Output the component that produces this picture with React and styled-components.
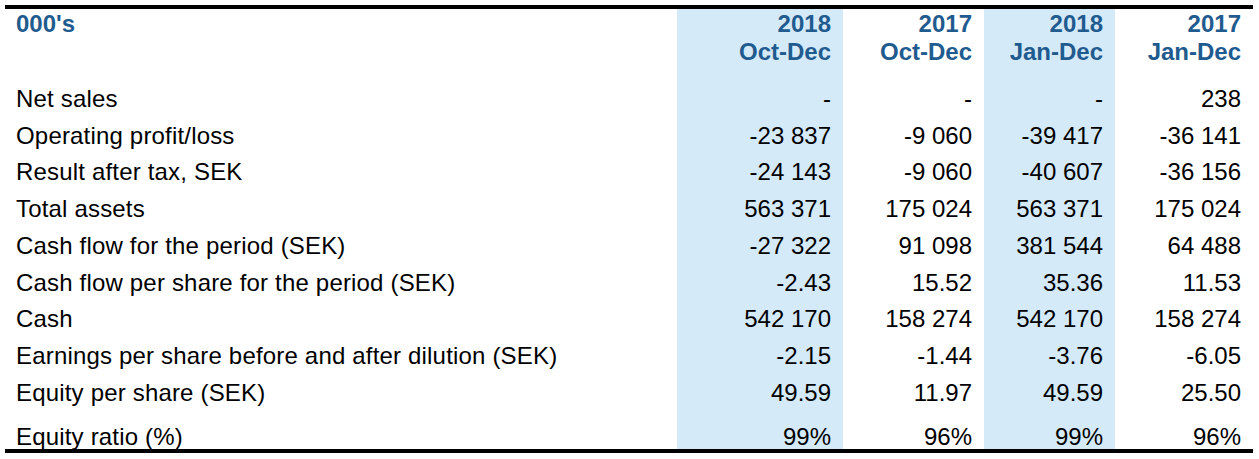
import React from "react";
import styled, { createGlobalStyle } from "styled-components";

const columns = [
  { year: "2018", period: "Oct-Dec", shaded: true },
  { year: "2017", period: "Oct-Dec", shaded: false },
  { year: "2018", period: "Jan-Dec", shaded: true },
  { year: "2017", period: "Jan-Dec", shaded: false },
];

const rows = [
  ["Net sales", "-", "-", "-", "238"],
  ["Operating profit/loss", "-23 837", "-9 060", "-39 417", "-36 141"],
  ["Result after tax, SEK", "-24 143", "-9 060", "-40 607", "-36 156"],
  ["Total assets", "563 371", "175 024", "563 371", "175 024"],
  ["Cash flow for the period (SEK)", "-27 322", "91 098", "381 544", "64 488"],
  ["Cash flow per share for the period (SEK)", "-2.43", "15.52", "35.36", "11.53"],
  ["Cash", "542 170", "158 274", "542 170", "158 274"],
  ["Earnings per share before and after dilution (SEK)", "-2.15", "-1.44", "-3.76", "-6.05"],
  ["Equity per share (SEK)", "49.59", "11.97", "49.59", "25.50"],
  ["Equity ratio (%)", "99%", "96%", "99%", "96%"],
];

function App() {
  return (
    <>
      <GlobalStyle />
      <Page>
        <Table>
          <HeaderRow>
            <HeadLabel>000's</HeadLabel>
            {columns.map((col, i) => (
              <HeadCell key={i} $shaded={col.shaded}>
                <div>{col.year}</div>
                <div>{col.period}</div>
              </HeadCell>
            ))}
          </HeaderRow>
          {rows.map((row, r) => {
            const last = r === rows.length - 1;
            return (
              <Row key={r} $last={last}>
                <Label>{row[0]}</Label>
                {row.slice(1).map((value, i) => (
                  <Value key={i} $shaded={columns[i].shaded}>
                    {value}
                  </Value>
                ))}
              </Row>
            );
          })}
        </Table>
      </Page>
    </>
  );
}

const GlobalStyle = createGlobalStyle`
  body {
    margin: 0;
    background: #ffffff;
    font-family: "Liberation Sans", Arial, sans-serif;
    color: #000000;
  }
`;

const Page = styled.div`
  padding: 5px 0 0 5px;
`;

const Table = styled.div`
  width: 1248px;
  border-top: 4px solid #000000;
  border-bottom: 4px solid #000000;
`;

const grid = `
  display: grid;
  grid-template-columns: 672px 166px 141px 131px 138px;
`;

const HeaderRow = styled.div`
  ${grid}
  font-size: 24px;
  font-weight: 700;
  line-height: 28px;
  color: #1f5b8e;
`;

const HeadLabel = styled.div`
  padding: 1px 0 15px 11px;
`;

const HeadCell = styled.div`
  padding: 1px 12px 15px 0;
  text-align: right;
  background: ${({ $shaded }) => ($shaded ? "#d5eaf9" : "transparent")};
`;

const Row = styled.div`
  ${grid}
  font-size: 24px;
  line-height: ${({ $last }) => ($last ? "25px" : "36.7px")};

  > div {
    padding-top: ${({ $last }) => ($last ? "13px" : "0")};
  }
`;

const Label = styled.div`
  padding-left: 11px;
  letter-spacing: 0.18px;
  white-space: nowrap;
`;

const Value = styled.div`
  padding-right: 12px;
  text-align: right;
  white-space: nowrap;
  background: ${({ $shaded }) => ($shaded ? "#d5eaf9" : "transparent")};
`;

export default App;
